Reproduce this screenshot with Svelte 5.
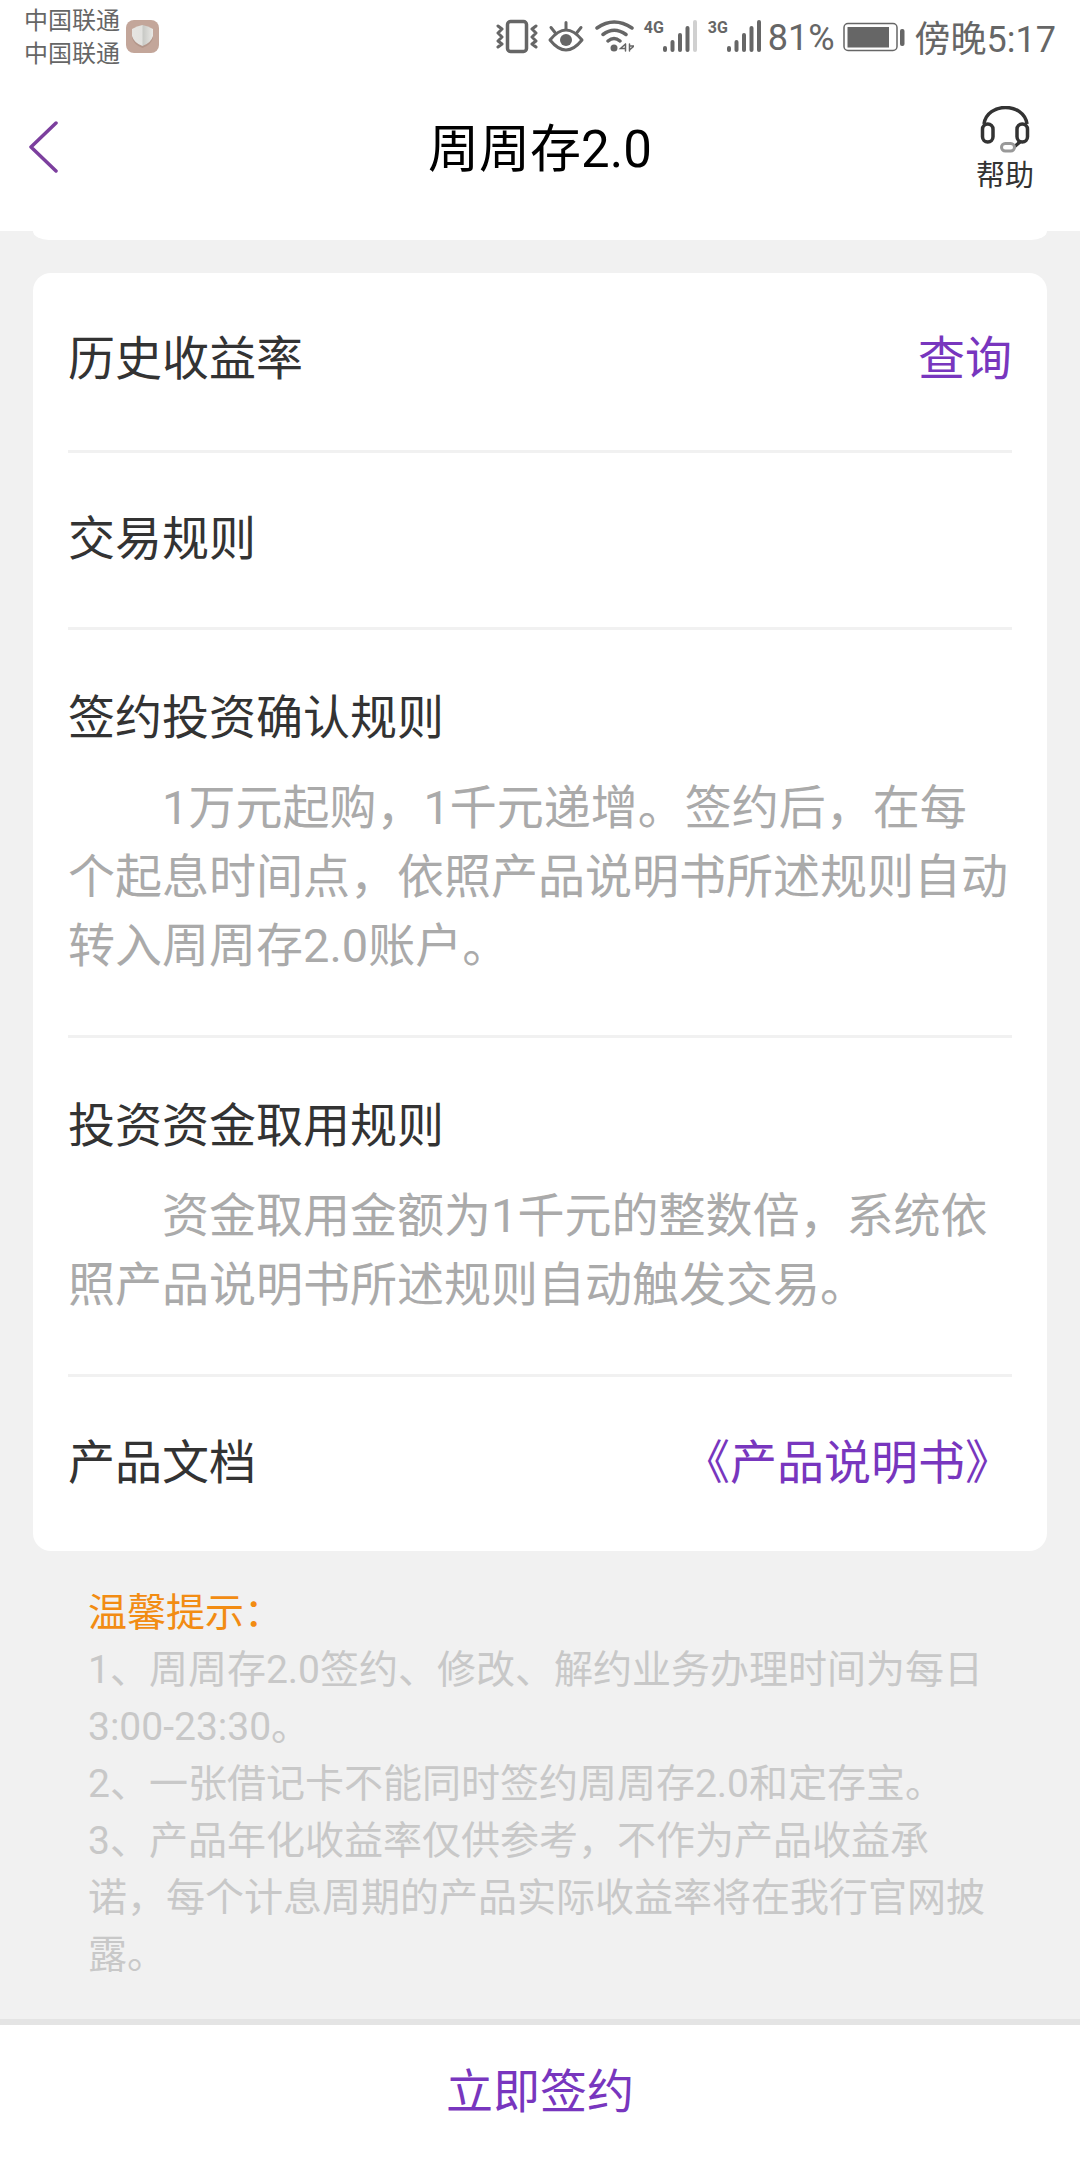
<script>
  const sections = [
    {
      title: '签约投资确认规则',
      body: '1万元起购，1千元递增。签约后，在每个起息时间点，依照产品说明书所述规则自动转入周周存2.0账户。'
    },
    {
      title: '投资资金取用规则',
      body: '资金取用金额为1千元的整数倍，系统依照产品说明书所述规则自动触发交易。'
    }
  ];

  const tips = [
    '1、周周存2.0签约、修改、解约业务办理时间为每日3:00-23:30。',
    '2、一张借记卡不能同时签约周周存2.0和定存宝。',
    '3、产品年化收益率仅供参考，不作为产品收益承诺，每个计息周期的产品实际收益率将在我行官网披露。'
  ];

  const networks = [
    { label: '4G', strength: 4 },
    { label: '3G', strength: 5 }
  ];
</script>

<div class="screen">
  <div class="status">
    <div class="carriers">
      <span>中国联通</span>
      <span>中国联通</span>
    </div>
    <svg class="shield" width="33" height="33" viewBox="0 0 33 33" aria-hidden="true">
      <defs>
        <linearGradient id="shieldFace" x1="0" x2="1">
          <stop offset="0" stop-color="#e6e4e1" />
          <stop offset="0.48" stop-color="#e2e2df" />
          <stop offset="0.52" stop-color="#c8c9c5" />
          <stop offset="1" stop-color="#e9e8e5" />
        </linearGradient>
      </defs>
      <rect width="33" height="33" rx="8" fill="#c3a69a" />
      <path d="M6 10 Q16 3 27 10 V18 Q25 25 16.500 28 Q8 25 6 18 Z" fill="#b3968a" />
      <path d="M6 9 Q11 6 16.500 5 Q22 6 27 9 V16 Q25 23 16.500 26 Q8 23 6 16 Z" fill="url(#shieldFace)" />
    </svg>
    <div class="indicators">
      <svg width="42" height="36" viewBox="495 18 42 36" fill="none" stroke="#666" stroke-width="3" stroke-linejoin="round" stroke-linecap="round" aria-hidden="true">
        <rect x="506.500" y="21.500" width="19" height="30" rx="3" stroke-width="3.500" />
        <path d="M497 26 l4 3 -4 4 4 4 -4 4 4 3 -4 3 M535 26 l-4 3 4 4 -4 4 4 4 -4 3 4 3" />
      </svg>
      <svg width="36" height="36" viewBox="549 18 36 36" fill="none" stroke="#666" stroke-width="3" stroke-linecap="round" aria-hidden="true">
        <path d="M551 40 Q567 20 583 40 Q567 60 551 40 Z" stroke-linejoin="round" />
        <circle cx="567" cy="40" r="6" fill="#666" stroke="none" />
        <path d="M567 22.500 V29 M552 27.500 l4 5 M582 27.500 l-4 5" />
      </svg>
      <svg width="40" height="36" viewBox="594 18 40 36" fill="none" stroke="#666" stroke-width="3.500" stroke-linecap="round" aria-hidden="true">
        <path d="M597 28 Q614 16 632 28 M603 34.500 Q614 26 626 34.500 M608 41 Q614 36 620 41" />
        <circle cx="614" cy="48" r="3.500" fill="#666" stroke="none" />
        <path d="M625.500 44 V51 M625.500 44 L620.500 48.500 H625.500 M629.500 44 V51 M629.500 46 H634 L629.500 50" stroke-width="1.500" />
      </svg>
      {#each networks as net}
        <div class="signal">
          <span>{net.label}</span>
          <svg width="36" height="36" viewBox="0 0 36 36" stroke-width="4" stroke-linecap="round" aria-hidden="true">
            {#each [29, 24, 17, 10, 4] as top, i}
              <path d="M{3 + i * 7.500} {top + (i === 0 ? 1 : 0)} V32" stroke={i < net.strength ? '#666' : '#d0d0d0'} />
            {/each}
          </svg>
        </div>
      {/each}
      <span class="level">81%</span>
      <svg width="62" height="36" viewBox="843 18 62 36" aria-hidden="true">
        <rect x="844" y="23.500" width="53" height="27" rx="4" fill="none" stroke="#666" stroke-width="1.500" />
        <rect x="847.500" y="27" width="41.500" height="20.500" fill="#666" />
        <rect x="900" y="29" width="4.500" height="17" rx="2" fill="#666" />
      </svg>
      <span>傍晚5:17</span>
    </div>
  </div>

  <header>
    <button class="back" aria-label="返回">
      <svg width="30" height="52" viewBox="0 0 30 52" fill="none" stroke="#7c3f9e" stroke-width="3.500" stroke-linecap="round" stroke-linejoin="round" aria-hidden="true">
        <path d="M27 2 L2 26 L27 50" />
      </svg>
    </button>
    <h1>周周存2.0</h1>
    <button class="help">
      <svg width="50" height="48" viewBox="980 105 50 48" fill="none" stroke="#333" stroke-width="3.500" aria-hidden="true">
        <path d="M984 123 C987 101 1024 101 1027 123" />
        <rect x="982.500" y="123" width="10.500" height="18" rx="5.250" />
        <rect x="1017" y="123" width="10.500" height="18" rx="5.250" />
        <path d="M1020 141 L1014 146" />
        <rect x="1001.500" y="142.500" width="13" height="7.500" rx="3.750" stroke="#999" stroke-width="3" />
      </svg>
      <span>帮助</span>
    </button>
  </header>

  <main>
    <div class="previous"></div>
    <div class="card">
      <section class="row first">
        <h2>历史收益率</h2>
        <a href="#history">查询</a>
      </section>
      <section class="row">
        <h2>交易规则</h2>
      </section>
      {#each sections as s}
        <section class="rule">
          <h2>{s.title}</h2>
          <p>{s.body}</p>
        </section>
      {/each}
      <section class="row">
        <h2>产品文档</h2>
        <a href="#manual">《产品说明书》</a>
      </section>
    </div>
    <aside>
      <h3>温馨提示：</h3>
      {#each tips as tip}
        <p>{tip}</p>
      {/each}
    </aside>
  </main>

  <footer>
    <button>立即签约</button>
  </footer>
</div>

<style>
  :global(body) {
    background: #f1f1f1;
  }

  .screen {
    min-height: 100vh;
    display: flex;
    flex-direction: column;
    font-family: Roboto, 'Noto Sans CJK SC', sans-serif;
    color: #333;
  }

  h1,
  h2,
  h3,
  p {
    margin: 0;
    font-weight: 400;
  }

  button {
    padding: 0;
    border: 0;
    background: none;
    font: inherit;
    color: inherit;
    cursor: pointer;
  }

  svg {
    display: block;
    flex: none;
  }

  a {
    color: #7836be;
    text-decoration: none;
  }

  .status {
    display: flex;
    align-items: flex-start;
    height: 75px;
    padding: 0 24px;
    background: #fff;
    color: #666;
    box-sizing: border-box;
  }

  .carriers {
    display: flex;
    flex-direction: column;
    padding-top: 5px;
    font-size: 24px;
    line-height: 33px;
  }

  .shield {
    margin: 20px 0 0 6px;
  }

  .indicators {
    display: flex;
    align-items: center;
    gap: 10px;
    height: 72px;
    margin-left: auto;
    font-size: 36px;
    white-space: nowrap;
  }

  .signal {
    display: flex;
    align-items: flex-start;
  }

  .signal span {
    width: 18px;
    font-size: 16px;
    line-height: 20px;
    font-weight: 700;
  }

  .level {
    margin: 3px -2px 0 -4px;
  }

  header {
    display: grid;
    grid-template-columns: 1fr auto 1fr;
    align-items: center;
    height: 156px;
    padding: 0 46px 0 29px;
    background: #fff;
    box-sizing: border-box;
  }

  .back {
    justify-self: start;
    padding-bottom: 12px;
  }

  h1 {
    padding: 0 0 6px 17px;
    font-size: 51px;
    line-height: 72px;
    color: #000;
  }

  .help {
    justify-self: end;
    display: flex;
    flex-direction: column;
    align-items: center;
    gap: 2px;
    padding-bottom: 5px;
    font-size: 29px;
    line-height: 40px;
  }

  main {
    flex: 1;
    padding: 0 33px 30px;
  }

  .previous {
    height: 9px;
    margin-bottom: 33px;
    background: #fff;
    border-radius: 0 0 16px 16px / 0 0 9px 9px;
  }

  .card {
    padding: 0 35px;
    background: #fff;
    border-radius: 18px;
    font-size: 47px;
    line-height: 69px;
  }

  section + section {
    border-top: 3px solid #f1f1f1;
  }

  h2 {
    font-size: 47px;
  }

  .row {
    display: flex;
    justify-content: space-between;
    padding: 51px 0 54px;
  }

  .row.first {
    padding-bottom: 57px;
  }

  .rule {
    padding: 53px 0 55px;
  }

  .rule p {
    margin-top: 21px;
    color: #aaa;
    text-indent: 2em;
  }

  aside {
    padding: 34px 55px 0;
    font-size: 39px;
    line-height: 57px;
    color: #c8c8c8;
  }

  h3 {
    font-size: 39px;
    color: #f28c13;
  }

  footer {
    display: flex;
    border-top: 6px solid #e4e4e4;
    background: #fff;
  }

  footer button {
    flex: 1;
    padding: 32px 0 34px;
    font-size: 47px;
    line-height: 69px;
    color: #7836be;
  }
</style>
